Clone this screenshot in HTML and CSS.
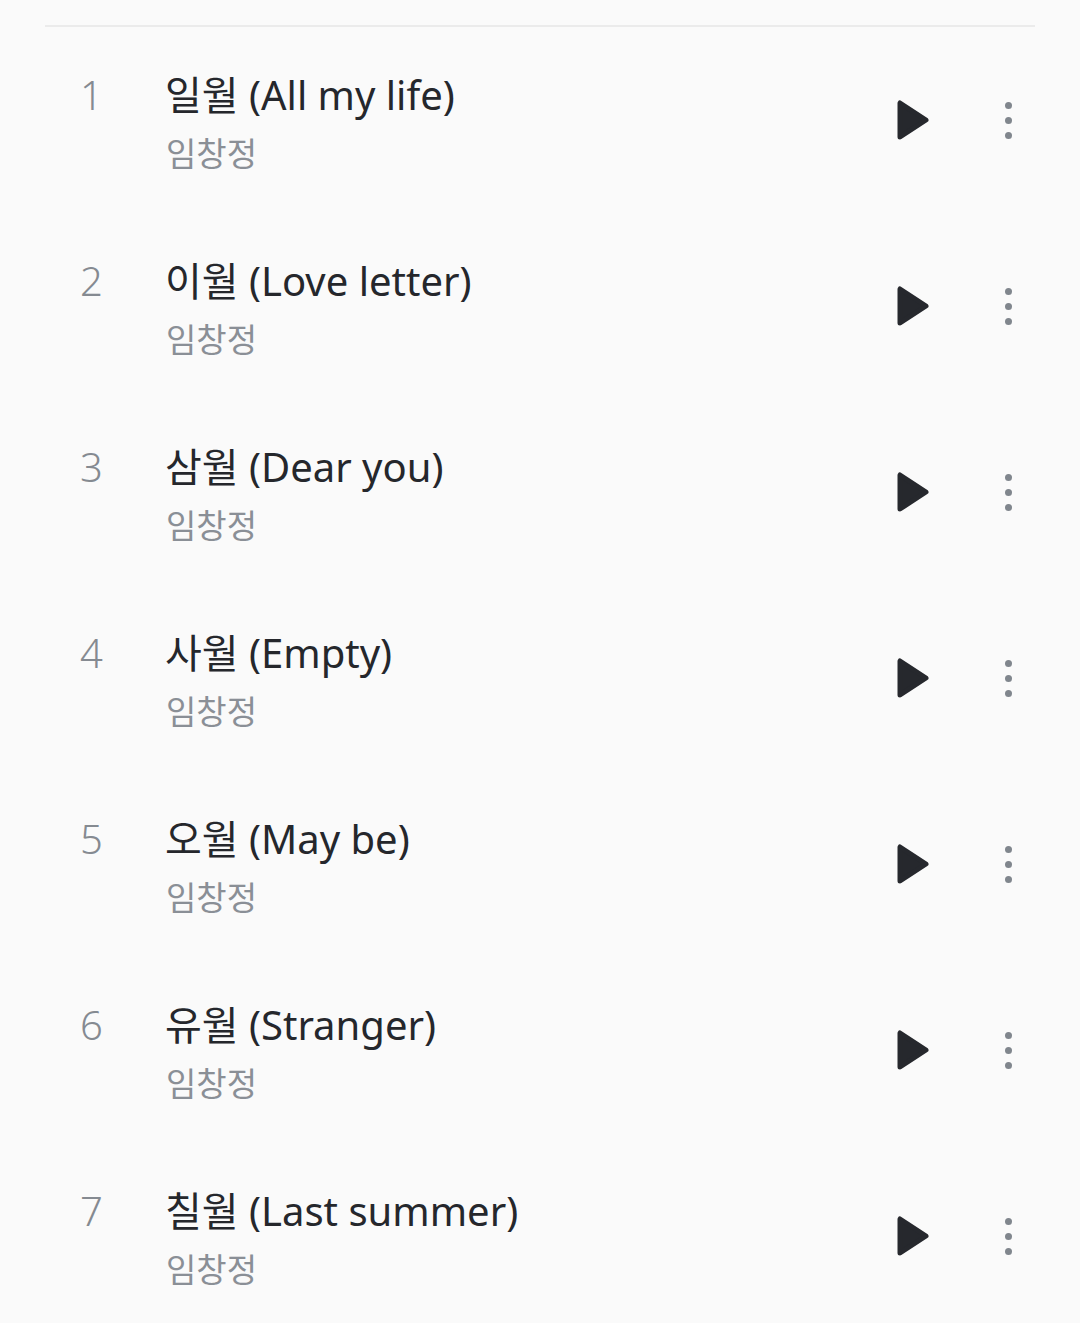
FILE: index.html
```html
<!DOCTYPE html>
<html lang="ko">
<head>
<meta charset="utf-8">
<link rel="stylesheet" href="styles.css">
</head>
<body>
<div class="list">
  <div class="track">
    <div class="main"><span class="num">1</span><div class="text"><span class="title">일월 (All my life)</span><span class="artist">임창정</span></div></div>
    <button class="play"><svg width="32" height="40" viewBox="0 0 32 40"><polygon points="3,3 3,37 29,20"/></svg></button>
    <button class="more"><span></span><span></span><span></span></button>
  </div>
  <div class="track">
    <div class="main"><span class="num">2</span><div class="text"><span class="title">이월 (Love letter)</span><span class="artist">임창정</span></div></div>
    <button class="play"><svg width="32" height="40" viewBox="0 0 32 40"><polygon points="3,3 3,37 29,20"/></svg></button>
    <button class="more"><span></span><span></span><span></span></button>
  </div>
  <div class="track">
    <div class="main"><span class="num">3</span><div class="text"><span class="title">삼월 (Dear you)</span><span class="artist">임창정</span></div></div>
    <button class="play"><svg width="32" height="40" viewBox="0 0 32 40"><polygon points="3,3 3,37 29,20"/></svg></button>
    <button class="more"><span></span><span></span><span></span></button>
  </div>
  <div class="track">
    <div class="main"><span class="num">4</span><div class="text"><span class="title">사월 (Empty)</span><span class="artist">임창정</span></div></div>
    <button class="play"><svg width="32" height="40" viewBox="0 0 32 40"><polygon points="3,3 3,37 29,20"/></svg></button>
    <button class="more"><span></span><span></span><span></span></button>
  </div>
  <div class="track">
    <div class="main"><span class="num">5</span><div class="text"><span class="title">오월 (May be)</span><span class="artist">임창정</span></div></div>
    <button class="play"><svg width="32" height="40" viewBox="0 0 32 40"><polygon points="3,3 3,37 29,20"/></svg></button>
    <button class="more"><span></span><span></span><span></span></button>
  </div>
  <div class="track">
    <div class="main"><span class="num">6</span><div class="text"><span class="title">유월 (Stranger)</span><span class="artist">임창정</span></div></div>
    <button class="play"><svg width="32" height="40" viewBox="0 0 32 40"><polygon points="3,3 3,37 29,20"/></svg></button>
    <button class="more"><span></span><span></span><span></span></button>
  </div>
  <div class="track">
    <div class="main"><span class="num">7</span><div class="text"><span class="title">칠월 (Last summer)</span><span class="artist">임창정</span></div></div>
    <button class="play"><svg width="32" height="40" viewBox="0 0 32 40"><polygon points="3,3 3,37 29,20"/></svg></button>
    <button class="more"><span></span><span></span><span></span></button>
  </div>
</div>
</body>
</html>
```
FILE: styles.css
```css
html, body {
  margin: 0;
  padding: 0;
  background: #fafafa;
}
body {
  font-family: "Noto Sans", "Noto Sans CJK KR", sans-serif;
  height: 1323px;
  overflow: hidden;
}
.list {
  margin: 25px 45px 0;
  border-top: 2px solid #ebebeb;
}
.track {
  display: flex;
  align-items: center;
  height: 186px;
}
.main {
  flex: 1;
  display: flex;
  align-items: baseline;
  padding-top: 4px;
}
.num {
  width: 86px;
  padding-left: 35px;
  font-size: 40px;
  font-weight: 300;
  color: #858a91;
}
.text {
  display: flex;
  flex-direction: column;
}
.title {
  font-size: 40px;
  line-height: 52px;
  color: #25272c;
  margin-left: -1px;
}
.artist {
  font-family: "Noto Sans CJK KR", sans-serif;
  font-size: 33px;
  line-height: 50px;
  margin-top: 6px;
  color: #8a8f96;
}
button {
  border: 0;
  background: none;
  padding: 0;
  margin: 0;
  cursor: pointer;
}
.play {
  width: 56px;
  height: 56px;
  display: flex;
  align-items: center;
  justify-content: center;
  margin-right: 40px;
}
.play svg polygon {
  fill: #26282d;
  stroke: #26282d;
  stroke-width: 5;
  stroke-linejoin: round;
}
.more {
  width: 54px;
  height: 56px;
  display: flex;
  flex-direction: column;
  align-items: center;
  justify-content: center;
  gap: 8px;
}
.more span {
  width: 7px;
  height: 7px;
  border-radius: 50%;
  background: #80868d;
}
```
